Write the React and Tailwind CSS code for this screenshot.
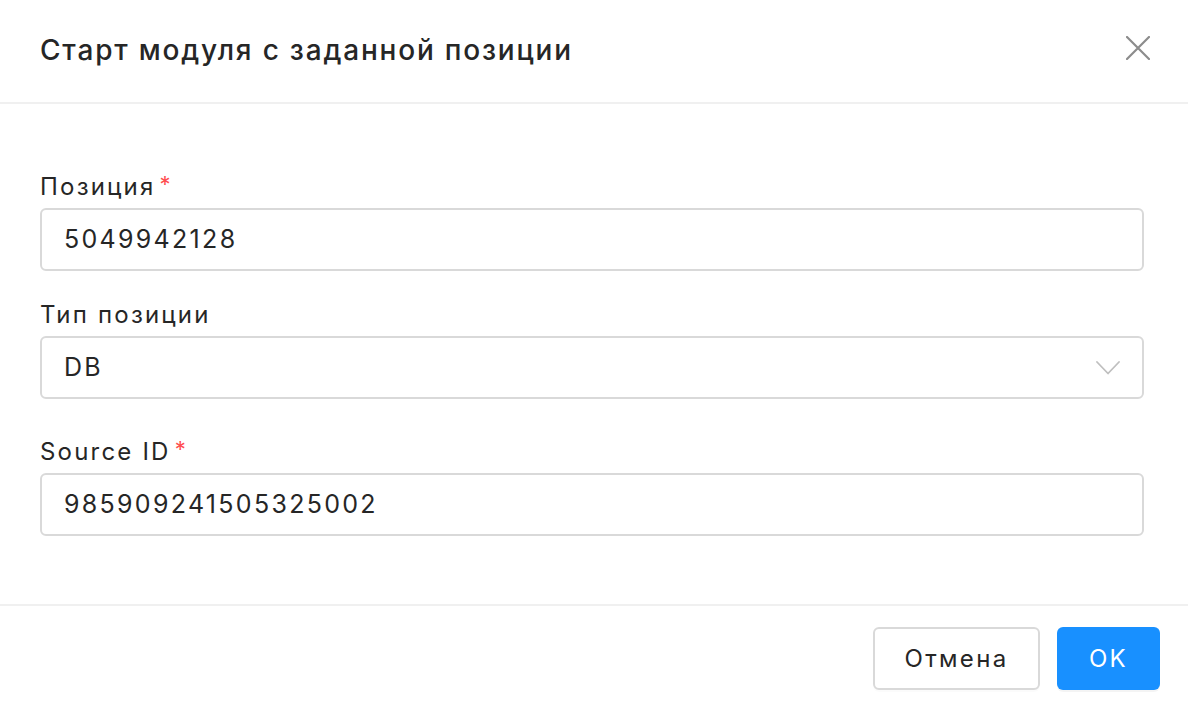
import React from "react";

function Label({ children, required }) {
  return (
    <div className="flex items-start h-[34px] leading-[34px] text-[24px] text-[#262626] tracking-[2.2px]">
      <span>{children}</span>
      {required && (
        <span className="ml-[4px] text-[#ff4d4f] text-[22px] leading-[28px] tracking-normal">*</span>
      )}
    </div>
  );
}

function Field({ value, select }) {
  return (
    <div className="mt-[4px] h-[63px] w-full rounded-[6px] border-2 border-[#d9d9d9] bg-white flex items-center justify-between pl-[22px] pr-[20px]">
      <span className="text-[25px] text-[#262626] tracking-[2.3px]">{value}</span>
      {select && (
        <svg width="24" height="14" viewBox="0 0 24 14" fill="none" className="mr-[2px]">
          <path d="M1 1 L12 12.5 L23 1" stroke="#bfbfbf" strokeWidth="1.8" strokeLinecap="round" strokeLinejoin="round" />
        </svg>
      )}
    </div>
  );
}

export default function App() {
  return (
    <div className="w-[1188px] h-[710px] bg-white flex flex-col font-['Inter',sans-serif] antialiased">
      <div className="h-[104px] shrink-0 border-b-2 border-[#f0f0f0] flex items-center justify-between pl-[40px] pr-[38px]">
        <h1 className="text-[28px] font-medium text-[#262626] tracking-[1.8px] -mt-[2px]">
          Старт модуля с заданной позиции
        </h1>
        <svg width="24" height="24" viewBox="0 0 24 24" fill="none" className="-mt-[6px]">
          <path d="M1 1 L23 23 M23 1 L1 23" stroke="#8c8c8c" strokeWidth="2.2" strokeLinecap="round" />
        </svg>
      </div>
      <div className="flex-1 pl-[40px] pr-[44px] pt-[66px]">
        <Label required>Позиция</Label>
        <Field value="5049942128" />
        <div className="mt-[27px]">
          <Label>Тип позиции</Label>
          <Field value="DB" select />
        </div>
        <div className="mt-[36px]">
          <Label required>Source ID</Label>
          <Field value="985909241505325002" />
        </div>
      </div>
      <div className="h-[106px] shrink-0 border-t-2 border-[#f0f0f0] flex items-start justify-end gap-[17px] pr-[28px] pt-[21px]">
        <button className="h-[63px] w-[167px] rounded-[6px] border-2 border-[#d9d9d9] bg-white text-[24px] text-[#262626] tracking-[2.3px] shadow-[0_2px_0_rgba(0,0,0,0.015)]">
          Отмена
        </button>
        <button className="h-[63px] w-[103px] rounded-[6px] bg-[#1890ff] text-[24px] text-white tracking-[2.3px] shadow-[0_2px_0_rgba(0,0,0,0.045)]">
          OK
        </button>
      </div>
    </div>
  );
}
